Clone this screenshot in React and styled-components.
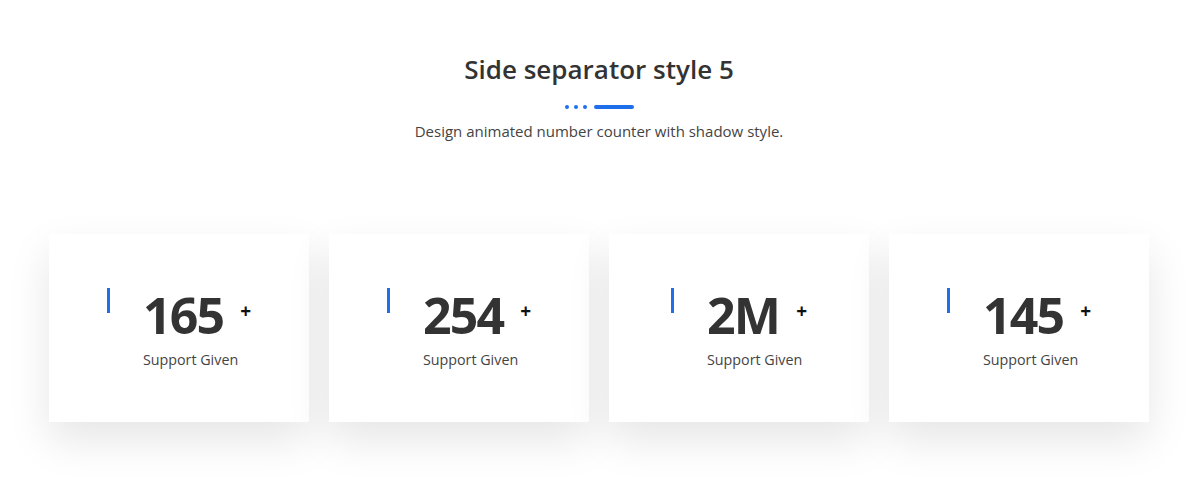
import React from "react"
import styled, { createGlobalStyle } from "styled-components"

const GlobalStyle = createGlobalStyle`
  body {
    margin: 0;
    background: #fff;
    font-family: "Open Sans", "Noto Sans", sans-serif;
    color: #333;
  }
`

const Section = styled.section`
  padding: 52px 0 80px;
  display: flex;
  flex-direction: column;
  align-items: center;
`

const Title = styled.h2`
  margin: 0;
  font-size: 26px;
  font-weight: 600;
  color: #333;
  line-height: 34px;
`

const Separator = styled.div`
  display: flex;
  align-items: center;
  gap: 5px;
  margin-top: 19px;
`

const Dot = styled.span`
  width: 4px;
  height: 4px;
  border-radius: 50%;
  background: #1f6feb;
`

const Line = styled.span`
  width: 40px;
  height: 4px;
  border-radius: 2px;
  background: #1f6feb;
  margin-left: 2px;
`

const Subtitle = styled.p`
  margin: 12px 0 0;
  font-size: 15px;
  color: #444;
  line-height: 20px;
`

const Grid = styled.div`
  margin-top: 93px;
  display: grid;
  grid-template-columns: repeat(4, 260px);
  gap: 20px;
`

const Card = styled.div`
  height: 188px;
  background: #fff;
  box-shadow: 0 18px 40px rgba(0, 0, 0, 0.1);
  display: flex;
  align-items: center;
  justify-content: center;
`

const Counter = styled.div`
  position: relative;
  padding-left: 36px;
  padding-top: 2px;

  &::before {
    content: "";
    position: absolute;
    left: 0;
    top: 0;
    width: 3px;
    height: 25px;
    background: #1f6feb;
  }
`

const NumberRow = styled.div`
  display: flex;
  align-items: flex-start;
`

const Value = styled.span`
  font-size: 50px;
  font-weight: 700;
  letter-spacing: -1.8px;
  line-height: 50px;
  color: #333;
`

const Plus = styled.span`
  font-size: 19px;
  font-weight: 700;
  color: #111;
  margin-left: 17px;
  line-height: 20px;
  margin-top: 11px;
`

const Label = styled.div`
  margin-top: 10px;
  font-size: 14.3px;
  color: #444;
`

const stats = [
  { value: "165" },
  { value: "254" },
  { value: "2M" },
  { value: "145" },
]

export default function App() {
  return (
    <>
      <GlobalStyle />
      <Section>
        <Title>Side separator style 5</Title>
        <Separator>
          <Dot />
          <Dot />
          <Dot />
          <Line />
        </Separator>
        <Subtitle>Design animated number counter with shadow style.</Subtitle>
        <Grid>
          {stats.map((s, i) => (
            <Card key={i}>
              <Counter>
                <NumberRow>
                  <Value>{s.value}</Value>
                  <Plus>+</Plus>
                </NumberRow>
                <Label>Support Given</Label>
              </Counter>
            </Card>
          ))}
        </Grid>
      </Section>
    </>
  )
}
